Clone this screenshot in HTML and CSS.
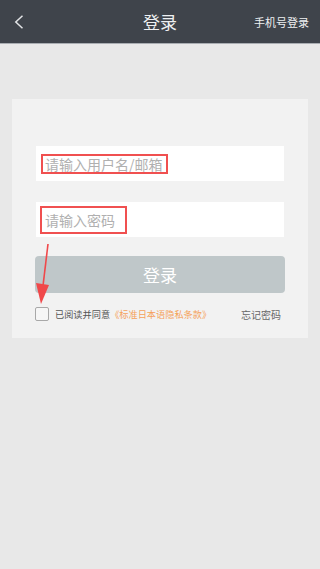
FILE: index.html
```html
<!DOCTYPE html>
<html lang="zh-CN">
<head>
<meta charset="utf-8">
<title>登录</title>
<link rel="stylesheet" href="styles.css">
</head>
<body>
<div class="page">
  <header class="topbar">
    <span class="back">
      <svg width="10" height="14" viewBox="0 0 10 14"><polyline points="8.5,0.8 1.8,7 8.5,13.2" fill="none" stroke="#e2e4e6" stroke-width="1.5"/></svg>
    </span>
    <h1 class="title">登录</h1>
    <span class="phone">手机号登录</span>
  </header>
  <main class="card">
    <div class="field"><span class="ph mark1">请输入用户名/邮箱</span></div>
    <div class="field"><span class="ph mark2">请输入密码</span></div>
    <button class="login">登录</button>
    <div class="agree">
      <span class="check"></span>
      <span class="gray">已阅读并同意</span>
      <span class="orange">《标准日本语隐私条款》</span>
      <span class="forgot">忘记密码</span>
    </div>
  </main>
  <svg class="arrow" width="30" height="70" viewBox="0 0 30 70">
    <line x1="18" y1="2" x2="12.5" y2="48" stroke="#f0484a" stroke-width="1.6"/>
    <polygon points="6,41 19,43 11,62" fill="#f0484a"/>
  </svg>
</div>
</body>
</html>
```
FILE: styles.css
```css
html, body {
  margin: 0;
  padding: 0;
}
body {
  background: #e8e8e8;
  font-family: "Noto Sans CJK SC", "Noto Sans", sans-serif;
}
.page {
  position: relative;
  width: 320px;
  height: 569px;
  overflow: hidden;
}
.topbar {
  height: 43px;
  background: #3f444b;
  border-bottom: 1px solid #a9adb2;
  display: flex;
  align-items: center;
  position: relative;
}
.back {
  display: flex;
  margin-left: 14px;
  margin-top: 1px;
}
.title {
  position: absolute;
  left: 0;
  right: 0;
  text-align: center;
  margin: 0;
  font-size: 17px;
  font-weight: normal;
  color: #eef0f2;
  line-height: 43px;
  pointer-events: none;
}
.phone {
  margin-left: auto;
  margin-right: 11px;
  font-size: 11px;
  color: #eef0f2;
}
.card {
  margin: 55px 12px 0;
  background: #f2f2f2;
  padding: 47px 24px 17px;
  display: flex;
  flex-direction: column;
}
.field {
  height: 35px;
  background: #fff;
  display: flex;
  align-items: center;
  padding-left: 9px;
}
.field + .field {
  margin-top: 21px;
}
.ph {
  font-size: 14px;
  color: #b0b0b0;
  line-height: 18px;
  position: relative;
}
.mark1::after, .mark2::after {
  content: "";
  position: absolute;
  border: 2px solid #f05050;
}
.mark1::after {
  left: -4px;
  right: -5px;
  top: -1px;
  bottom: -1px;
}
.mark2::after {
  left: -5px;
  right: -12px;
  top: -5px;
  bottom: -5px;
}
.login {
  margin: 19px -1px 0;
  height: 37px;
  border: none;
  border-radius: 4px;
  background: #bfc7c9;
  color: #fff;
  font-family: inherit;
  font-size: 17px;
  padding: 0;
}
.agree {
  margin-top: 14px;
  display: flex;
  align-items: center;
  font-size: 9.2px;
  height: 14px;
  margin-left: -1px;
}
.check {
  width: 12px;
  height: 12px;
  border: 1px solid #a8a8a8;
  border-radius: 2px;
  background: #f6f6f6;
  margin-right: 6px;
}
.gray {
  color: #555;
}
.orange {
  color: #f5a15a;
}
.forgot {
  margin-left: auto;
  margin-right: 3px;
  font-size: 10px;
  color: #666;
}
.arrow {
  position: absolute;
  left: 30px;
  top: 242px;
}
```
